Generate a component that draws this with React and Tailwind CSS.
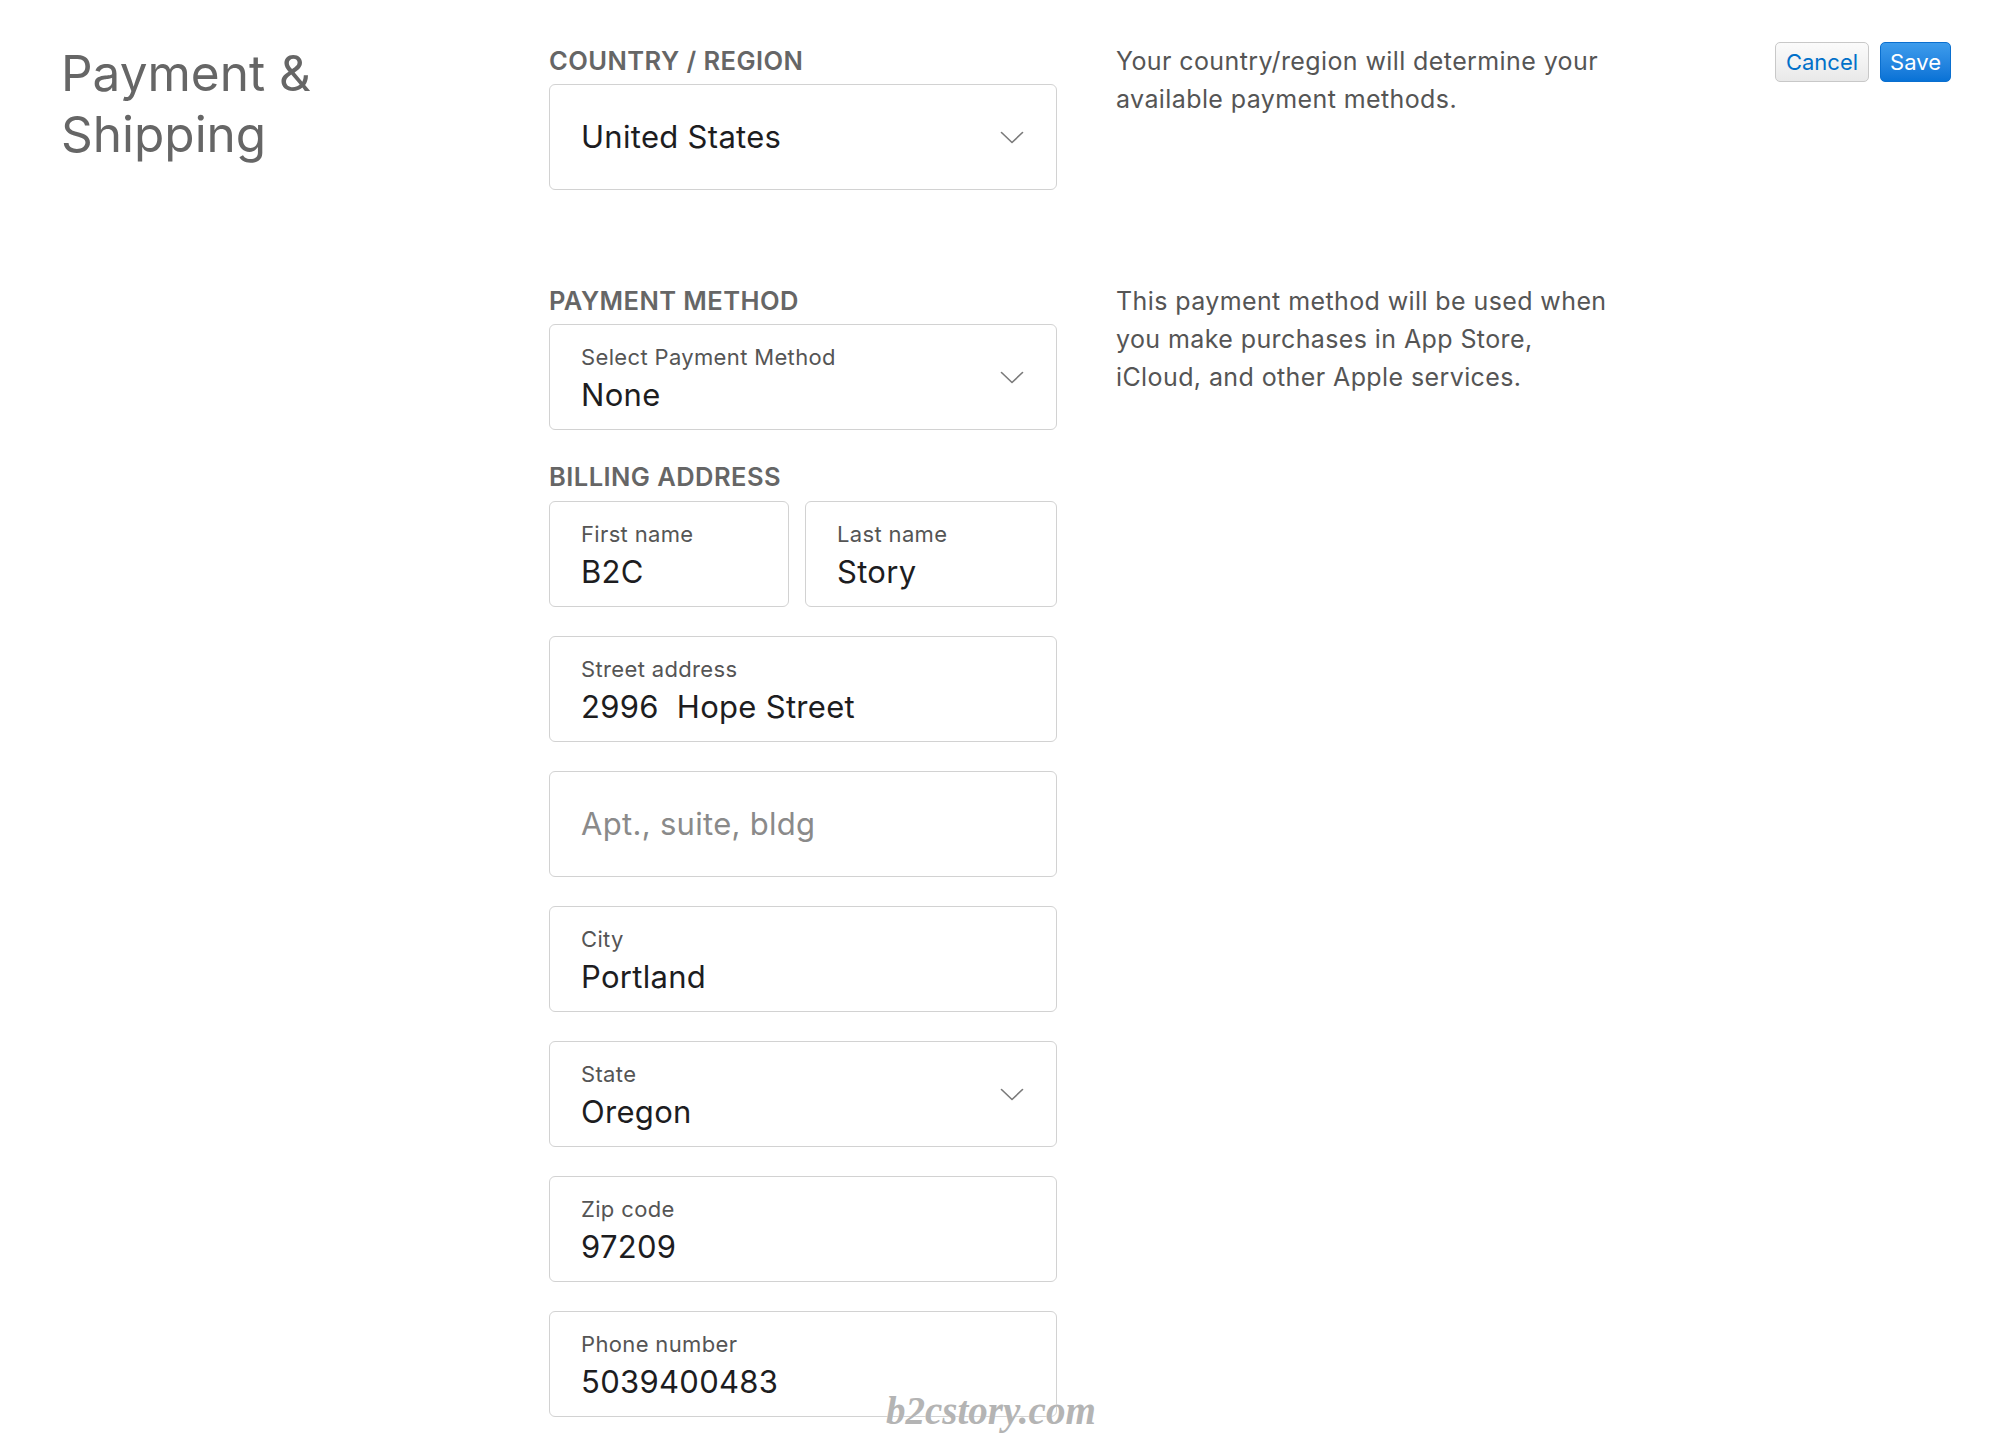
import React from "react";

function Chevron() {
  return (
    <svg width="24" height="13" viewBox="0 0 24 13" fill="none" className="shrink-0">
      <polyline points="1.5,1.5 12,11.5 22.5,1.5" stroke="#7a7a7a" strokeWidth="1.6" strokeLinecap="round" strokeLinejoin="round" />
    </svg>
  );
}

function Field({ label, value, placeholder, select, className = "" }) {
  return (
    <div
      className={`h-[106px] rounded-[6px] border-[1.5px] border-[#d2d2d2] bg-white pl-[31px] pr-[32px] flex items-center ${className}`}
    >
      <div className={`flex-1 min-w-0 ${label ? "pt-[3px]" : ""}`}>
        {label && <div className="text-[22px] leading-[26px] tracking-[0.35px] text-[#555]">{label}</div>}
        {value && (
          <div
            className={`text-[31px] leading-[36px] tracking-[0.3px] text-[#1d1d1f] whitespace-pre ${label ? "mt-[7px]" : ""}`}
          >
            {value}
          </div>
        )}
        {placeholder && (
          <div className="text-[31px] leading-[36px] tracking-[0.3px] text-[#8a8a8a]">{placeholder}</div>
        )}
      </div>
      {select && <Chevron />}
    </div>
  );
}

function SectionLabel({ children }) {
  return (
    <div className="text-[25.5px] leading-[30px] font-semibold tracking-[0.45px] text-[#666]">{children}</div>
  );
}

function Description({ children }) {
  return (
    <div className="ml-[59px] mt-[-4px] text-[25px] leading-[38px] tracking-[0.4px] text-[#555]">{children}</div>
  );
}

export default function App() {
  return (
    <div className="relative min-h-screen bg-white font-['Inter',sans-serif] antialiased">
      <div className="flex pl-[61px] pr-[49px] pt-[42px]">
        {/* title */}
        <div className="w-[488px] shrink-0">
          <h1 className="mt-[1px] text-[49.5px] leading-[61px] font-normal text-[#666]">
            Payment &amp;
            <br />
            Shipping
          </h1>
        </div>

        {/* form + notes */}
        <div className="mt-[4px] flex flex-col">
          <div className="flex items-start">
            <div className="w-[508px] shrink-0">
              <SectionLabel>COUNTRY / REGION</SectionLabel>
              <Field className="mt-[8px]" value="United States" select />
            </div>
            <Description>
              Your country/region will determine your
              <br />
              available payment methods.
            </Description>
          </div>

          <div className="flex items-start mt-[96px]">
            <div className="w-[508px] shrink-0">
              <SectionLabel>PAYMENT METHOD</SectionLabel>
              <Field className="mt-[8px]" label="Select Payment Method" value="None" select />

              <div className="mt-[32px]">
                <SectionLabel>BILLING ADDRESS</SectionLabel>
              </div>
              <div className="mt-[9px] grid grid-cols-[240px_1fr] gap-[16px]">
                <Field label="First name" value="B2C" />
                <Field label="Last name" value="Story" />
              </div>

              <div className="mt-[29px] flex flex-col gap-[29px]">
                <Field label="Street address" value="2996  Hope Street" />
                <Field placeholder="Apt., suite, bldg" />
                <Field label="City" value="Portland" />
                <Field label="State" value="Oregon" select />
                <Field label="Zip code" value="97209" />
                <Field label="Phone number" value="5039400483" />
              </div>
            </div>
            <Description>
              This payment method will be used when
              <br />
              you make purchases in App Store,
              <br />
              iCloud, and other Apple services.
            </Description>
          </div>
        </div>

        {/* actions */}
        <div className="ml-auto flex items-start gap-[11px]">
          <button className="h-[40px] px-[10px] rounded-[5px] border border-[#c8c8c8] bg-gradient-to-b from-[#fbfbfb] to-[#e9e9e9] text-[22px] leading-none text-[#0070c9]">
            Cancel
          </button>
          <button className="h-[40px] px-[9px] rounded-[5px] border border-[#0a6fcf] bg-gradient-to-b from-[#3d9cec] to-[#0772d6] text-[22px] leading-none text-white">
            Save
          </button>
        </div>
      </div>

      {/* watermark */}
      <div className="absolute left-[886px] top-[1391px] font-['Liberation_Serif',serif] italic font-bold text-[39px] leading-[40px] text-[#b4b4b4] [text-shadow:0_0_1px_#fff]">
        b2cstory.com
      </div>
    </div>
  );
}
